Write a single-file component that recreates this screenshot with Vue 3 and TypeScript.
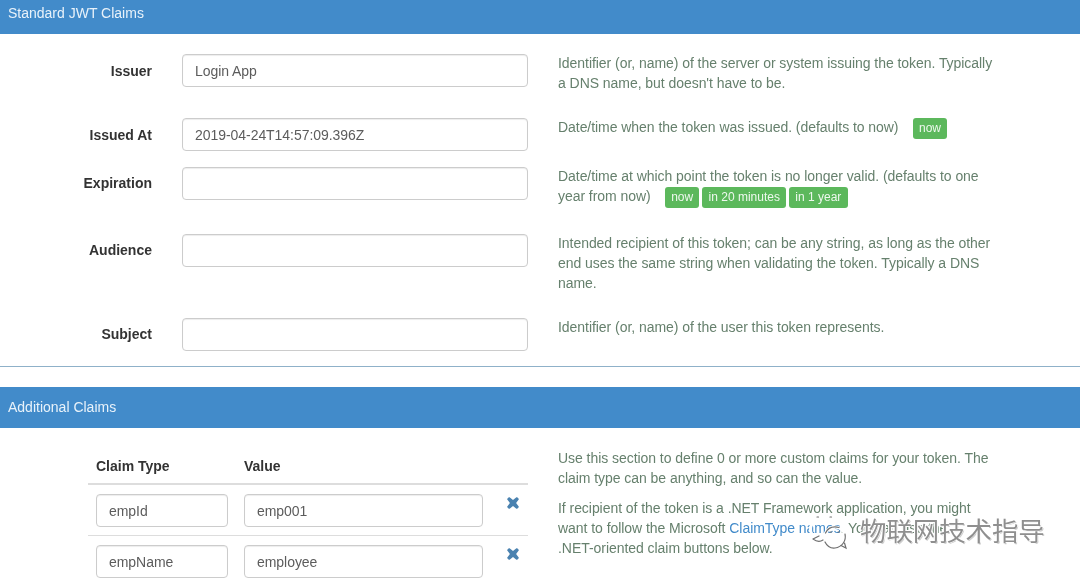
<script setup lang="ts">
interface Field { label: string; value: string; cls: string; help: string; badges: string[] }
const fields: Field[] = [
  { label: 'Issuer', value: 'Login App', cls: 'r-issuer', help: "Identifier (or, name) of the server or system issuing the token. Typically a DNS name, but doesn't have to be.", badges: [] },
  { label: 'Issued At', value: '2019-04-24T14:57:09.396Z', cls: 'r-issued', help: 'Date/time when the token was issued. (defaults to now)', badges: ['now'] },
  { label: 'Expiration', value: '', cls: 'r-exp', help: 'Date/time at which point the token is no longer valid. (defaults to one year from now)', badges: ['now', 'in 20 minutes', 'in 1 year'] },
  { label: 'Audience', value: '', cls: 'r-aud', help: 'Intended recipient of this token; can be any string, as long as the other end uses the same string when validating the token. Typically a DNS name.', badges: [] },
  { label: 'Subject', value: '', cls: 'r-sub', help: 'Identifier (or, name) of the user this token represents.', badges: [] },
]
const claims = [
  { type: 'empId', value: 'emp001' },
  { type: 'empName', value: 'employee' },
]
</script>

<template>
  <div class="page">
    <header class="bar bar-top">Standard JWT Claims</header>
    <section class="form">
      <div v-for="f in fields" :key="f.label" class="row" :class="f.cls">
        <label class="lbl">{{ f.label }}</label>
        <div class="field"><input class="input" :value="f.value" readonly /></div>
        <p class="help">
          {{ f.help }}
          <span v-if="f.badges.length" class="badges">
            <span v-for="b in f.badges" :key="b" class="badge">{{ b }}</span>
          </span>
        </p>
      </div>
    </section>
    <hr class="rule" />
    <header class="bar bar-add">Additional Claims</header>
    <section class="extra">
      <div class="table">
        <div class="thead"><span class="th-type">Claim Type</span><span>Value</span></div>
        <div v-for="c in claims" :key="c.type" class="trow">
          <input class="input type" :value="c.type" readonly />
          <input class="input val" :value="c.value" readonly />
          <svg class="x" viewBox="0 0 12 12" width="12" height="12" aria-hidden="true">
            <path d="M2.6 0.3 6 2.9 9.4 0.3Q9.8 0 10.2 0.3L11.7 1.8Q12 2.2 11.7 2.6L9.1 6 11.7 9.4Q12 9.8 11.7 10.2L10.2 11.7Q9.800 12 9.4 11.7L6 9.1 2.6 11.7Q2.2 12 1.8 11.7L0.3 10.2Q0 9.8 0.3 9.4L2.9 6 0.3 2.6Q0 2.2 0.3 1.800L1.8 0.3Q2.2 0 2.6 0.3Z" />
          </svg>
        </div>
      </div>
      <div class="notes">
        <p>Use this section to define 0 or more custom claims for your token. The claim type can be anything, and so can the value.</p>
        <p>If recipient of the token is a .NET Framework application, you might want to follow the Microsoft <a>ClaimType names</a>. You can use the <span class="nb">.NET-oriented</span> claim buttons below.</p>
      </div>
    </section>
    <div class="mark">
      <svg class="mark-icon" viewBox="0 0 48 40" width="48" height="40" fill="none" aria-hidden="true">
        <g stroke="#fff" stroke-width="3" stroke-linecap="round">
          <circle cx="30" cy="26.500" r="10.500" />
          <path d="M8 26C3 18 6 8 16 6M24 6 27 9" />
        </g>
        <g stroke="#6f6f6f" stroke-width="1.200" stroke-linecap="round">
          <path d="M20.500 22C23 17 28 15 34 16.500M40 23C41.500 30 37 36 30 37C25.500 37.500 22 35 20 31" />
          <path d="M36 34.500 41 37 39.500 32" />
          <path d="M8 28 14 25M8 28C12 31 15 31 18 29M12 6h1.500M25 6h1.500" />
          <path d="M25 21h1.500M33 21h1.500" />
        </g>
      </svg>
      <span class="mark-text">物联网技术指导</span>
    </div>
  </div>
</template>

<style>
html, body { margin: 0; background: #fff; overflow: hidden; }
</style>

<style scoped>
.page {
  position: relative;
  width: 1080px;
  height: 579px;
  overflow: hidden;
  background: #fff;
  font-family: "Liberation Sans", Arial, sans-serif;
  font-size: 14px;
  color: #555;
  filter: blur(0.35px);
}
.bar {
  background: #428bca;
  color: #e8f2fa;
  font-size: 14px;
  padding-left: 8px;
  box-sizing: border-box;
}
.bar-top { height: 34px; line-height: 26px; }
.bar-add { height: 41px; line-height: 41px; margin-top: 20px; }
.form { height: 332px; box-sizing: border-box; padding-top: 20px; }
.row { display: flex; align-items: flex-start; }
.r-issuer { height: 64px; }
.r-issued { height: 49px; }
.r-exp { height: 67px; }
.r-aud { height: 84px; }
.r-sub { height: 48px; }
.lbl {
  width: 152px;
  flex: none;
  text-align: right;
  font-weight: 700;
  color: #333;
  line-height: 34px;
}
.r-exp .lbl, .r-aud .lbl, .r-sub .lbl { line-height: 32px; }
.field { margin-left: 30px; width: 346px; flex: none; }
.input {
  display: block;
  box-sizing: border-box;
  width: 100%;
  height: 33px;
  padding: 0 12px;
  border: 1px solid #ccc;
  border-radius: 4px;
  box-shadow: inset 0 1px 1px rgba(0, 0, 0, .075);
  font: 14px "Liberation Sans", Arial, sans-serif;
  letter-spacing: -0.05px;
  color: #5c5c5c;
  background: #fff;
  outline: none;
}
.help {
  margin: -1px 0 0 30px;
  width: 440px;
  line-height: 20px;
  color: #66806d;
  letter-spacing: -0.05px;
}
.badges { display: inline-flex; gap: 3px; margin: 1px 0 0 10.5px; vertical-align: top; }
.badge {
  background: #5cb85c;
  color: #eef8ee;
  font-size: 12px;
  line-height: 21px;
  padding: 0 6.2px;
  border-radius: 3px;
  height: 21px;
  letter-spacing: 0;
}
.rule { margin: 0; border: 0; border-top: 1px solid #8fb1c9; height: 0; }
.extra { display: flex; align-items: flex-start; }
.table { margin-left: 88px; width: 440px; flex: none; padding-top: 24px; }
.thead {
  display: flex;
  height: 33px;
  box-sizing: border-box;
  border-bottom: 2px solid #ddd;
  font-weight: 700;
  color: #333;
  line-height: 29px;
  padding-left: 8px;
}
.th-type { width: 148px; }
.trow {
  display: flex;
  gap: 16px;
  height: 51px;
  box-sizing: border-box;
  padding: 9px 0 0 8px;
  border-bottom: 1px solid #ddd;
}
.type { width: 132px; flex: none; }
.val { width: 239px; flex: none; }
.x { margin: 3px 0 0 8px; fill: #4a82b0; flex: none; }
.notes { margin-left: 30px; width: 440px; padding-top: 20px; color: #66806d; line-height: 20px; letter-spacing: -0.05px; }
.notes p { margin: 0 0 10px; }
.notes a { color: #428bca; }
.nb { white-space: nowrap; }
.mark {
  position: absolute;
  left: 805px;
  top: 511px;
  display: flex;
  align-items: flex-start;
  gap: 7px;
}
.mark-text {
  font: 26.4px/38px "Noto Sans CJK SC", sans-serif;
  color: #8f8f8f;
  text-shadow: -1px -1px 0 #fff, 1px -1px 0 #fff, -1px 1px 0 #fff, 1px 1px 0 #cfcfcf;
}
</style>
